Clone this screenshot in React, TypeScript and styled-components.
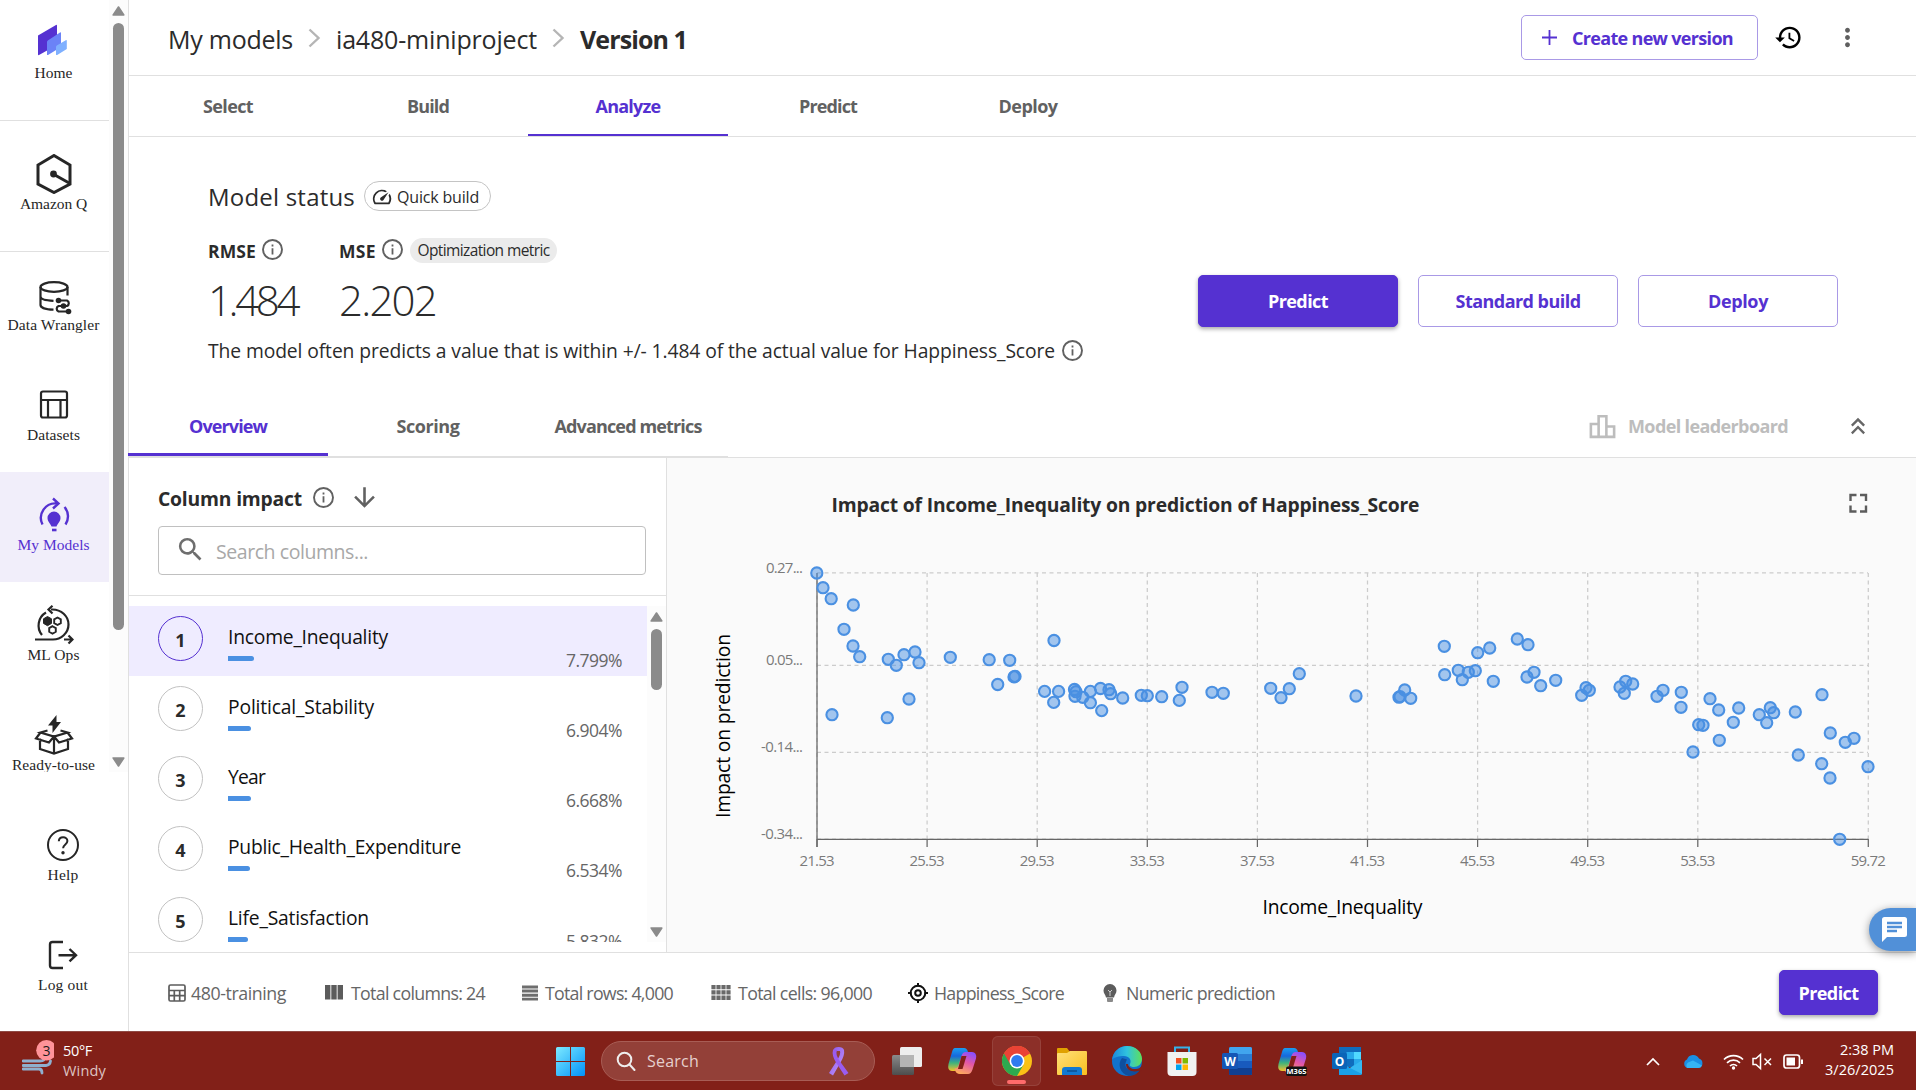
import React, { useLayoutEffect, useRef, useState } from "react";
import styled, { createGlobalStyle, css } from "styled-components";
import {
  MdHistory,
  MdMoreVert,
  MdSearch,
  MdArrowDownward,
  MdKeyboardDoubleArrowUp,
  MdOutlineLeaderboard,
  MdSpeed,
} from "react-icons/md";

const sans = `"Open Sans", "Noto Sans", sans-serif`;
const serif = `"Liberation Serif", serif`;
const purple = "#5531d1";
const line = "#e0e0e0";
const blue = "#4a90e2";

const Global = createGlobalStyle`
  * { box-sizing: border-box; }
  body { margin: 0; background: #fff; font-family: ${sans}; color: #2b2b2b; overflow: hidden; }
  svg { display: block; flex: none; }
`;

/* Text tracked so that it takes exactly the given width. */
const Tracked = styled.span`
  display: inline-block;
  white-space: pre;
`;
function Fit({ w, children }: { w: number; children: string }) {
  const ref = useRef<HTMLSpanElement>(null);
  const [spacing, setSpacing] = useState(0);
  useLayoutEffect(() => {
    const el = ref.current;
    if (!el) return;
    const natural = el.getBoundingClientRect().width - spacing * children.length;
    setSpacing((w - natural) / children.length);
  }, [w, children]);
  return (
    <Tracked ref={ref} style={{ letterSpacing: `${spacing}px` }}>
      {children}
    </Tracked>
  );
}

const Screen = styled.div`
  width: 1916px;
  height: 1090px;
  display: flex;
  flex-direction: column;
  overflow: hidden;
`;
const Page = styled.div`
  height: 1031px;
  display: flex;
`;

/* ---------- sidebar ---------- */
const Sidebar = styled.aside`
  width: 129px;
  border-right: 1px solid ${line};
  font-family: ${serif};
  flex: none;
`;
const NavScroll = styled.div`
  height: 772px;
  display: flex;
  overflow: hidden;
`;
const NavList = styled.nav`
  width: 109px;
  height: 772px;
  overflow: hidden;
`;
const NavItem = styled.div<{ $h?: number; $top?: number; $active?: boolean; $rule?: boolean }>`
  height: ${(p) => p.$h ?? 110}px;
  padding: ${(p) => p.$top ?? 23}px 2px 0 0;
  display: flex;
  flex-direction: column;
  align-items: center;
  color: ${(p) => (p.$active ? purple : "#262626")};
  background: ${(p) => (p.$active ? "#f1eefa" : "transparent")};
  border-bottom: ${(p) => (p.$rule ? `1px solid ${line}` : "none")};
`;
const NavLabel = styled.div`
  font-size: 15.5px;
  line-height: 20px;
  height: 20px;
`;
const NavBottom = styled.div`
  padding: 30px 0 0 0;
`;
const Track = styled.div<{ $w: number; $top: number; $bottom: number }>`
  width: ${(p) => p.$w}px;
  background: #fcfcfc;
  display: flex;
  flex-direction: column;
  align-items: center;
  padding: ${(p) => p.$top}px 0 ${(p) => p.$bottom}px;
`;
const Thumb = styled.div<{ $h: number }>`
  width: 11px;
  height: ${(p) => p.$h}px;
  margin-top: 7px;
  margin-bottom: auto;
  border-radius: 6px;
  background: #8b8b8b;
`;
const Arrow = ({ down }: { down?: boolean }) => (
  <svg width="13" height="10" viewBox="0 0 13 10">
    <path
      d={down ? "M1.2 1h10.6L6.5 9z" : "M1.2 9h10.6L6.5 1z"}
      fill="#8b8b8b"
      stroke="#8b8b8b"
      strokeWidth="1.6"
      strokeLinejoin="round"
    />
  </svg>
);

const Glyph = ({ children, sw = 2.2 }: { children: React.ReactNode; sw?: number }) => (
  <svg width="40" height="40" viewBox="0 0 40 40" fill="none" stroke="currentColor" strokeWidth={sw}>
    {children}
  </svg>
);
const HomeIcon = () => (
  <Glyph>
    <g stroke="none">
      <path d="M4 12.5 22 2q1-.5 1 .7V22L5 32q-1 .5-1-.7z" fill="#5531d1" />
      <path d="M13 19q0-1 .8-1.500L26 9.500q1-.5 1 .6V24L14 32q-1 .4-1-.6z" fill="#6b83f7" />
      <path d="M22 24q0-1 .8-1.500l9-5.300q1-.4 1 .6V26l-9.600 6q-1.200.4-1.200-.6z" fill="#7fb0ff" />
    </g>
  </Glyph>
);
const QIcon = () => (
  <Glyph sw={3}>
    <path d="M20 1.500 36 11v19L20 38.500 4 30V11z" />
    <path d="M20 20.500 36 29.500" />
    <circle cx="19.500" cy="20" r="3.400" fill="currentColor" stroke="none" />
  </Glyph>
);
const WranglerIcon = () => (
  <Glyph>
    <ellipse cx="20" cy="12" rx="13.500" ry="4.800" />
    <path d="M6.500 12v18c0 2.500 5 4.500 13 4.700M33.500 12v8.500M6.500 21.500c0 2.500 5 4 13 4.300" />
    <path d="M25 25.500h8a3 3 0 0 1 0 5.500h-8.500a3 3 0 0 0 0 5.500H33" />
    <g fill="currentColor" stroke="none">
      <circle cx="24.500" cy="25.500" r="2.800" />
      <circle cx="29.500" cy="31" r="2.800" />
      <circle cx="34.500" cy="36.500" r="2.800" />
    </g>
  </Glyph>
);
const DatasetIcon = () => (
  <Glyph>
    <rect x="7" y="6.500" width="26" height="26" rx="2" />
    <path d="M7 15h26M14 15v17.500M26.500 15v17.500" />
  </Glyph>
);
const ModelsIcon = () => (
  <Glyph sw={2.4}>
    <path d="M8.500 29.500A14.500 14.500 0 0 1 23 8.500M19 3.500l5.500 5-5.500 5" />
    <path d="M30.500 12a14.500 14.500 0 0 1 1 17.500" />
    <path
      d="M20 16.500a6.500 6.500 0 0 1 6.500 6.500c0 3.500-3 5.500-4 8.500h-5c-1-3-4-5-4-8.500a6.500 6.500 0 0 1 6.500-6.500z"
      fill="currentColor"
      stroke="none"
    />
    <path d="M18 35h4.500" strokeWidth="2.600" />
  </Glyph>
);
const OpsIcon = () => (
  <Glyph sw={2.2}>
    <path d="M8 30A15 15 0 0 1 12 7.500M17 4.500h1.500C27 4.500 34.500 11 34.500 19.500S27 34.500 19 34.500H1" />
    <path d="M18.500.8 14.500 4.500l4 4M30 34.500h8M34.500 30.500l4 4-4 4" />
    <path d="M13.500 11.500 17.500 13.800v4.600L13.500 20.700 9.500 18.400v-4.600z" fill="currentColor" strokeWidth="1" />
    <path d="m23.500 12.500 3.300 1.900v3.700l-3.300 1.900-3.300-1.900v-3.700zM18.500 21.200l3.300 1.900v3.700l-3.300 1.900-3.300-1.900v-3.700z" strokeWidth="1.900" />
  </Glyph>
);
const ReadyIcon = () => (
  <Glyph sw={2.2}>
    <path d="M22.500 0v7h4.500L18.500 18v-7.500H14z" fill="currentColor" stroke="none" />
    <path d="M6 23.500v10.500l14 4.500 14-4.500V23.500M20 21.500v17M13.500 15.500 6.500 17.500 20 21.500l13.500-4-7-2M6.500 17.500 2 23.500l13 4 5-6 5 6 13-4-4.500-6" />
  </Glyph>
);
const HelpIcon = () => (
  <Glyph sw={2}>
    <circle cx="20" cy="20" r="15" />
    <path d="M15.800 16.200c.2-5.400 8.600-5.200 8.600-.2 0 3.500-4.300 3.400-4.300 7.300" />
    <circle cx="20" cy="27.800" r="1.700" fill="currentColor" stroke="none" />
  </Glyph>
);
const LogoutIcon = () => (
  <Glyph sw={2.400}>
    <path d="M20 7H9.500Q7 7 7 9.500v21Q7 33 9.500 33H20M15.500 20.200h17M26.500 14l6.500 6.200-6.500 6.200" />
  </Glyph>
);

/* ---------- main column ---------- */
const Main = styled.main`
  flex: 1;
  min-width: 0;
  display: flex;
  flex-direction: column;
`;
const Header = styled.header`
  height: 76px;
  border-bottom: 1px solid ${line};
  display: flex;
  align-items: center;
  padding: 0 54px 0 39px;
`;
const Crumbs = styled.div`
  display: flex;
  align-items: center;
  font-size: 25px;
  font-weight: 500;
  line-height: 34px;
  padding-top: 2px;
  margin-right: auto;
  b { font-weight: 700; }
`;
const CrumbArrow = () => (
  <svg width="43" height="24" viewBox="0 0 43 24">
    <path d="m16.500 2.500 9 8.500-9 8.500" fill="none" stroke="#b5b5b5" strokeWidth="2.400" />
  </svg>
);
const Button = styled.button<{ $w: number; $h: number; $primary?: boolean }>`
  width: ${(p) => p.$w}px;
  height: ${(p) => p.$h}px;
  display: flex;
  align-items: center;
  justify-content: center;
  padding: 0;
  font: 700 18px/24px ${sans};
  border-radius: 5px;
  color: ${purple};
  background: #fff;
  border: 1px solid #a999e6;
  ${(p) =>
    p.$primary &&
    css`
      color: #fff;
      background: ${purple};
      border-color: ${purple};
      box-shadow: 0 2px 4px rgba(0, 0, 0, 0.35);
    `}
`;
const CreateButton = styled(Button)`
  padding-right: 4px;
  margin-right: 1px;
`;
const PlusIcon = styled.svg`
  margin-right: 15px;
`;
const HeaderIcons = styled.div`
  display: flex;
  align-items: center;
  gap: 30px;
  margin-left: 15px;
`;
const Tabs = styled.div`
  height: 61px;
  border-bottom: 1px solid ${line};
  display: flex;
`;
const Tab = styled.div<{ $active?: boolean; $bar?: number }>`
  width: 200px;
  text-align: center;
  font-size: 18px;
  font-weight: 700;
  line-height: 60px;
  height: 100%;
  color: ${(p) => (p.$active ? purple : "#616161")};
  box-shadow: ${(p) => (p.$active ? `inset 0 -${p.$bar ?? 2}px ${purple}` : "none")};
`;
const MainTab = styled(Tab)`
  margin-left: -1px;
  margin-right: 1px;
`;

const Status = styled.section`
  height: 264px;
  padding: 44px 78px 0 79px;
  display: flex;
  justify-content: space-between;
`;
const TitleRow = styled.div`
  display: flex;
  align-items: center;
  height: 30px;
  gap: 9px;
  font-size: 24px;
  font-weight: 500;
`;
const QuickPill = styled.div`
  width: 127px;
  height: 30px;
  border: 1px solid #c4c4c4;
  border-radius: 15px;
  display: flex;
  align-items: center;
  gap: 4px;
  padding: 1px 0 0 6px;
  font-size: 16px;
  font-weight: 400;
  line-height: 28px;
`;
const Metrics = styled.div`
  display: flex;
  margin-top: 27px;
`;
const Metric = styled.div<{ $w: number }>`
  width: ${(p) => p.$w}px;
`;
const MetricHead = styled.div`
  display: flex;
  align-items: center;
  gap: 6px;
  height: 25px;
  font-size: 17.5px;
  font-weight: 700;
  svg { margin-top: -2px; }
`;
const OptPill = styled.div`
  width: 147px;
  height: 25px;
  margin-left: 1px;
  border-radius: 13px;
  background: #ebebeb;
  text-align: center;
  font-size: 15.5px;
  font-weight: 400;
  line-height: 25px;
`;
const MetricValue = styled.div`
  margin-top: 12px;
  font-size: 42px;
  font-weight: 300;
  line-height: 50px;
`;
const Description = styled.div`
  display: flex;
  align-items: center;
  gap: 7px;
  margin-top: 14px;
  height: 24px;
  font-size: 19.3px;
  line-height: 24px;
  svg { margin-top: -2px; }
`;
const Actions = styled.div`
  display: flex;
  gap: 20px;
  margin-top: 94px;
`;

const SubRow = styled.div`
  height: 57px;
  display: flex;
  box-shadow: inset 0 -1px ${line};
`;
const SubTabs = styled.div`
  display: flex;
  margin-left: -1px;
  border-bottom: 2px solid ${line};
`;
const SubTab = styled(Tab)`
  line-height: 51px;
`;
const Leaderboard = styled.div`
  margin-left: auto;
  margin-right: 56px;
  display: flex;
  align-items: center;
  gap: 10px;
  height: 50px;
  color: #bdbdbd;
  font-size: 18px;
  font-weight: 700;
`;
const Collapse = styled.div`
  height: 50px;
  display: flex;
  align-items: center;
  color: #666;
  margin-right: 44px;
`;

const Split = styled.div`
  height: 494px;
  display: flex;
`;
const Columns = styled.section`
  width: 538px;
  border-right: 1px solid ${line};
  flex: none;
`;
const ColumnsHead = styled.div`
  height: 138px;
  border-bottom: 1px solid ${line};
  padding: 24px 0 0 29px;
`;
const ColumnsTitle = styled.div`
  display: flex;
  align-items: center;
  height: 32px;
  font-size: 19.3px;
  font-weight: 700;
  color: #616161;
  span { color: #2b2b2b; margin-right: 11px; }
  svg { margin-top: -2px; }
  svg + svg { margin: -2px 0 0 15px; }
`;
const SearchBox = styled.div`
  width: 488px;
  height: 49px;
  margin-top: 12px;
  border: 1px solid #c0c0c0;
  border-radius: 4px;
  display: flex;
  align-items: center;
  padding: 2px 0 0 16px;
  gap: 10px;
  font-size: 19.5px;
  color: #a8a8a8;
  svg { color: #6e6e6e; margin-top: -5px; }
`;
const ListArea = styled.div`
  display: flex;
  height: 336px;
  margin-top: 10px;
  overflow: hidden;
`;
const List = styled.div`
  width: 518px;
  height: 336px;
  overflow: hidden;
`;
const Row = styled.div<{ $active?: boolean }>`
  height: ${(p) => (p.$active ? 70 : 70.2)}px;
  display: flex;
  padding: 10px 25px 0 29px;
  background: ${(p) => (p.$active ? "#efecff" : "#fff")};
`;
const Rank = styled.div<{ $active?: boolean }>`
  width: 45px;
  height: 45px;
  border-radius: 50%;
  border: 1px solid ${(p) => (p.$active ? purple : "#c2c2c2")};
  background: ${(p) => (p.$active ? "transparent" : "#fff")};
  text-align: center;
  font-size: 18px;
  font-weight: 700;
  line-height: 46px;
`;
const RowName = styled.div`
  margin-left: 25px;
  flex: 1;
  color: #111;
  font-size: 19.3px;
  line-height: 26px;
  padding-top: 8px;
`;
const Bar = styled.div`
  height: 5px;
  margin-top: 6px;
  border-radius: 0 3px 3px 0;
  background: ${blue};
`;
const Percent = styled.div`
  padding-top: 32px;
  font-size: 17.5px;
  line-height: 24px;
  color: #666;
`;
const ChartPanel = styled.section`
  flex: 1;
  background: #fafafa;
`;

const Footer = styled.footer`
  height: 79px;
  border-top: 1px solid ${line};
  display: flex;
  align-items: center;
  padding: 1px 38px 0 39px;
  justify-content: space-between;
`;
const Facts = styled.div`
  display: grid;
  grid-template-columns: 157px 197px 189px 197px 195px 180px;
`;
const Fact = styled.div<{ $gap: number }>`
  display: flex;
  align-items: center;
  gap: ${(p) => p.$gap}px;
  font-size: 17.800px;
  line-height: 24px;
  color: #666;
  padding-top: 1px;
`;
const ChatButton = styled.div`
  position: fixed;
  right: 0;
  top: 908px;
  width: 47px;
  height: 43px;
  border-radius: 22px 0 0 22px;
  background: #5190d8;
  box-shadow: 0 2px 8px rgba(0, 0, 0, 0.4);
  padding: 9px 0 0 13px;
`;

const InfoIcon = () => (
  <svg width="21" height="21" viewBox="0 0 21 21">
    <circle cx="10.500" cy="10.500" r="9.500" fill="none" stroke="#616161" strokeWidth="1.900" />
    <path d="M10.500 9.300v6.200M10.500 5.500v2" stroke="#616161" strokeWidth="1.800" />
  </svg>
);

/* ---------- chart ---------- */
const points: [number, number][] = [
  [816.8, 573], [823, 587.7], [831.2, 598.7], [853.3, 605], [844, 629.3], [853, 646], [859.7, 656.7],
  [888.3, 659.3], [896.3, 665.3], [904, 654.7], [915, 652], [919, 662.7], [950.3, 657.3], [989.2, 659.7],
  [1009.7, 660.3], [1014, 676.9], [1015, 676.4], [997.7, 684.5], [909, 699], [887.3, 717.7], [832, 714.7],
  [1054, 640.5], [1044.6, 691.4], [1053.7, 702.4], [1058.6, 691.4], [1074.5, 689.5], [1076, 691.7],
  [1075, 696.3], [1082.7, 697.3], [1090.4, 691.4], [1090.4, 702.7], [1100.5, 688.5], [1101.7, 710.6],
  [1109, 689.7], [1110.7, 693.7], [1122.7, 698], [1141.3, 695.3], [1147.3, 695.7], [1161.7, 696.7],
  [1179.3, 700.4], [1182, 687.3], [1212, 692.3], [1223.3, 693.3], [1270.7, 688.3], [1281, 697.7],
  [1289.3, 688.7], [1299.3, 673.7], [1356, 696], [1399, 697.2], [1400, 696.6], [1404.7, 690],
  [1410.7, 698.3], [1444.3, 646.3], [1444.7, 674.7], [1458.3, 670.3], [1462.3, 679.7], [1468.3, 672.3],
  [1475.3, 670.7], [1477.7, 652.7], [1489.7, 648], [1493.3, 681.3], [1517.3, 639], [1528, 644.7],
  [1527, 677], [1534, 672.3], [1540.7, 685.7], [1555.7, 680.3], [1581.7, 695.3], [1586, 687.7],
  [1589.3, 690.3], [1620, 687], [1625.7, 681.3], [1624.3, 693.3], [1632.7, 684], [1657, 696.3],
  [1663, 690.3], [1681.3, 692.3], [1681, 707.3], [1710, 698.7], [1718.7, 710], [1698.7, 724.7],
  [1703, 725.3], [1719.3, 740.3], [1693, 752], [1733.3, 722.3], [1738.7, 708], [1759.3, 714.7],
  [1770.3, 707.7], [1773.7, 712.7], [1766.7, 722.7], [1795.3, 712], [1822, 694.7], [1830.3, 733],
  [1845.3, 742.3], [1854, 738.3], [1798.3, 755], [1821.7, 763.7], [1830, 778], [1868, 766.7], [1839.7, 839.3],
];
const xTicks: [number, string][] = [
  [817, "21.53"], [927.100, "25.53"], [1037.200, "29.53"], [1147.300, "33.53"], [1257.400, "37.53"],
  [1367.500, "41.53"], [1477.600, "45.53"], [1587.700, "49.53"], [1697.800, "53.53"], [1868.300, "59.72"],
];
const yTicks: [number, string, number][] = [
  [572.8, "0.27...", 37], [665.4, "0.05...", 37], [752.400, "-0.14...", 42], [839.2, "-0.34...", 42],
];
const Chart = () => (
  <svg width="1249" height="494" viewBox="667 458 1249 494" fontFamily={sans}>
    <text x="831.500" y="511.500" fontSize="19.300" fontWeight="700" fill="#2b2b2b" textLength="588">
      Impact of Income_Inequality on prediction of Happiness_Score
    </text>
    <path
      d="M1850.500 501v-6h6M1860 495h6v6M1866 505.500v6h-6M1856.500 511.500h-6v-6"
      fill="none"
      stroke="#5c5c5c"
      strokeWidth="2.400"
    />
    {yTicks.map(([y]) => (
      <line key={y} x1="817" x2="1868" y1={y} y2={y} stroke="#cccccc" strokeWidth="1.250" strokeDasharray="4 3.500" />
    ))}
    {xTicks.map(([x]) => (
      <line key={x} x1={x} x2={x} y1="573" y2="839" stroke="#cccccc" strokeWidth="1.250" strokeDasharray="4 3.500" />
    ))}
    <path d="M817 573v274M817 839.300h1051.300" fill="none" stroke="#666" strokeWidth="1.250" />
    {xTicks.map(([x, t]) => (
      <g key={t}>
        <line x1={x} x2={x} y1="839" y2="847" stroke="#666" strokeWidth="1.250" />
        <text x={x - 17.500} y="866" fontSize="15" fill="#7a7a7a" textLength="35">
          {t}
        </text>
      </g>
    ))}
    {yTicks.map(([y, t, w]) => (
      <text key={t} x={803 - w} y={y} fontSize="15" fill="#7a7a7a" textLength={w}>
        {t}
      </text>
    ))}
    {points.map(([x, y], i) => (
      <circle key={i} cx={x} cy={y} r="5.600" fill={blue} fillOpacity="0.5" stroke={blue} strokeWidth="2.100" />
    ))}
    <text transform="translate(730 818) rotate(-90)" fontSize="19.300" fill="#000" textLength="184">
      Impact on prediction
    </text>
    <text x="1262.500" y="914" fontSize="19.300" fill="#000" textLength="160">
      Income_Inequality
    </text>
  </svg>
);

/* ---------- taskbar ---------- */
const Taskbar = styled.div`
  height: 59px;
  background: #822018;
  border-top: 1px solid #8f4a44;
  color: #fff;
  display: flex;
  align-items: center;
  justify-content: space-between;
  padding: 0 23px 0 22px;
`;
const Weather = styled.div`
  display: flex;
  width: 534px;
  gap: 9px;
  font-size: 14.5px;
  line-height: 20px;
  div + div { color: #ddc4c2; }
`;
const WeatherIcon = styled.svg`
  margin-top: -2px;
`;
const Lines = styled.div`
  margin-top: -1px;
`;
const Apps = styled.div`
  display: flex;
  align-items: center;
  height: 58px;
  margin-right: auto;
`;
const TaskSearch = styled.div`
  width: 274px;
  height: 40px;
  margin: 0 17px 0 16px;
  border: 1px solid #a85d55;
  border-radius: 20px;
  background: #934038;
  display: flex;
  align-items: center;
  padding: 0 25px 0 14px;
  gap: 11px;
  font-size: 16px;
  color: #e6d0ce;
  svg + span { margin-right: auto; }
`;
const AppTile = styled.div<{ $on?: boolean }>`
  width: 49px;
  height: 50px;
  margin-right: 6px;
  border-radius: 6px;
  display: flex;
  flex-direction: column;
  align-items: center;
  padding-top: 10px;
  gap: 4px;
  ${(p) => p.$on && "background: #8c2f28; box-shadow: inset 0 0 0 1px #96423b;"}
`;
const RunningMark = styled.div`
  width: 19px;
  height: 4px;
  border-radius: 2px;
  background: #ff6b6b;
`;
const AppRow = styled.div`
  display: flex;
  margin-left: -10px;
`;
const Tray = styled.div`
  display: flex;
  align-items: center;
`;
const Clock = styled.div`
  width: 77px;
  margin: -2px -1px 0 13px;
  text-align: right;
  font-size: 14.5px;
  line-height: 20px;
`;

const App30 = ({ children }: { children: React.ReactNode }) => (
  <svg width="30" height="30" viewBox="0 0 30 30">
    {children}
  </svg>
);
const CopilotShape = () => (
  <>
    <path d="M8 2h9q3 0 4 4l1.500 5h-5q-2.500 0-3.500 3l-2.500 8q-1 3-4 3H5Q0 25 1.500 18L5 6q1-4 3-4z" fill="url(#cpA)" />
    <path d="M22.500 6H25q5 0 4 6.500l-3.500 11Q24 28 21 28h-8q-4 0-5-4l-.5-1.500q3 0 4-3l3-9.500q1.200-4 4-4z" fill="url(#cpB)" />
    <path d="M14.500 10h5l-4 13h-4.500z" fill="#822018" />
  </>
);
const Gradients = () => (
  <svg width="0" height="0">
    <defs>
      <linearGradient id="cpA" x1="0" y1="0" x2="0" y2="1">
        <stop offset="0" stopColor="#1b9df0" />
        <stop offset=".35" stopColor="#1668dd" />
        <stop offset=".65" stopColor="#3fb37c" />
        <stop offset="1" stopColor="#f4c22b" />
      </linearGradient>
      <linearGradient id="cpB" x1=".7" y1="0" x2=".3" y2="1">
        <stop offset="0" stopColor="#8a4fff" />
        <stop offset=".45" stopColor="#e457a5" />
        <stop offset="1" stopColor="#ffab5c" />
      </linearGradient>
      <linearGradient id="win" x1="0" y1="0" x2="1" y2="1">
        <stop offset="0" stopColor="#7deaff" />
        <stop offset="1" stopColor="#0091f8" />
      </linearGradient>
      <linearGradient id="fold" x1="0" y1="0" x2="1" y2="1">
        <stop offset="0" stopColor="#ffe07a" />
        <stop offset="1" stopColor="#f9bf1f" />
      </linearGradient>
      <linearGradient id="edgeA" x1="0" y1=".3" x2="1" y2=".3">
        <stop offset="0" stopColor="#1a86dd" />
        <stop offset=".5" stopColor="#2fc3df" />
        <stop offset="1" stopColor="#5fe05a" />
      </linearGradient>
      <linearGradient id="rib" x1="0" y1="0" x2="1" y2="1">
        <stop offset="0" stopColor="#8a52e8" />
        <stop offset="1" stopColor="#c49bff" />
      </linearGradient>
      <linearGradient id="gray" x1="0" y1="0" x2="0" y2="1">
        <stop offset="0" stopColor="#8a8a8a" />
        <stop offset="1" stopColor="#4d4d4d" />
      </linearGradient>
    </defs>
  </svg>
);
const officeText = { fontFamily: sans, fontWeight: 700, fill: "#fff" };

const rows = [
  { name: "Income_Inequality", w: 160, pct: "7.799%", bar: 26 },
  { name: "Political_Stability", w: 146, pct: "6.904%", bar: 23 },
  { name: "Year", w: 37, pct: "6.668%", bar: 22.5 },
  { name: "Public_Health_Expenditure", w: 233, pct: "6.534%", bar: 22 },
  { name: "Life_Satisfaction", w: 141, pct: "5.832%", bar: 20 },
];

export default function App() {
  return (
    <Screen>
      <Global />
      <Gradients />
      <Page>
        <Sidebar>
          <NavScroll>
            <NavList>
              <NavItem $h={121} $rule><HomeIcon /><NavLabel><Fit w={38}>Home</Fit></NavLabel></NavItem>
              <NavItem $h={131} $top={33} $rule><QIcon /><NavLabel><Fit w={67}>Amazon Q</Fit></NavLabel></NavItem>
              <NavItem><WranglerIcon /><NavLabel><Fit w={92}>Data Wrangler</Fit></NavLabel></NavItem>
              <NavItem><DatasetIcon /><NavLabel><Fit w={53}>Datasets</Fit></NavLabel></NavItem>
              <NavItem $active><ModelsIcon /><NavLabel><Fit w={72}>My Models</Fit></NavLabel></NavItem>
              <NavItem><OpsIcon /><NavLabel><Fit w={52}>ML Ops</Fit></NavLabel></NavItem>
              <NavItem><ReadyIcon /><NavLabel><Fit w={83}>Ready-to-use</Fit></NavLabel></NavItem>
            </NavList>
            <Track $w={19} $top={6} $bottom={5}>
              <Arrow />
              <Thumb $h={607} />
              <Arrow down />
            </Track>
          </NavScroll>
          <NavBottom>
            <NavItem><HelpIcon /><NavLabel><Fit w={31}>Help</Fit></NavLabel></NavItem>
            <NavItem><LogoutIcon /><NavLabel><Fit w={50}>Log out</Fit></NavLabel></NavItem>
          </NavBottom>
        </Sidebar>

        <Main>
          <Header>
            <Crumbs>
              <Fit w={125}>My models</Fit>
              <CrumbArrow />
              <Fit w={201}>ia480-miniproject</Fit>
              <CrumbArrow />
              <b><Fit w={107}>Version 1</Fit></b>
            </Crumbs>
            <CreateButton $w={237} $h={45}>
              <PlusIcon width="15" height="15" viewBox="0 0 15 15">
                <path d="M7.500 0v15M0 7.500h15" stroke={purple} strokeWidth="1.800" />
              </PlusIcon>
              <Fit w={161}>Create new version</Fit>
            </CreateButton>
            <HeaderIcons>
              <MdHistory size={29} color="#000" />
              <MdMoreVert size={29} color="#5f5f5f" />
            </HeaderIcons>
          </Header>

          <Tabs>
            <MainTab><Fit w={50}>Select</Fit></MainTab>
            <MainTab><Fit w={42}>Build</Fit></MainTab>
            <MainTab $active><Fit w={65}>Analyze</Fit></MainTab>
            <MainTab><Fit w={58}>Predict</Fit></MainTab>
            <MainTab><Fit w={59}>Deploy</Fit></MainTab>
          </Tabs>

          <Status>
            <div>
              <TitleRow>
                <Fit w={147}>Model status</Fit>
                <QuickPill>
                  <MdSpeed size={22} />
                  <Fit w={82}>Quick build</Fit>
                </QuickPill>
              </TitleRow>
              <Metrics>
                <Metric $w={131}>
                  <MetricHead><Fit w={48}>RMSE</Fit><InfoIcon /></MetricHead>
                  <MetricValue><Fit w={89}>1.484</Fit></MetricValue>
                </Metric>
                <Metric $w={240}>
                  <MetricHead>
                    <Fit w={37}>MSE</Fit><InfoIcon />
                    <OptPill><Fit w={132}>Optimization metric</Fit></OptPill>
                  </MetricHead>
                  <MetricValue><Fit w={97}>2.202</Fit></MetricValue>
                </Metric>
              </Metrics>
              <Description>
                <Fit w={847}>The model often predicts a value that is within +/- 1.484 of the actual value for Happiness_Score</Fit>
                <InfoIcon />
              </Description>
            </div>
            <Actions>
              <Button $w={200} $h={52} $primary><Fit w={60}>Predict</Fit></Button>
              <Button $w={200} $h={52}><Fit w={125}>Standard build</Fit></Button>
              <Button $w={200} $h={52}><Fit w={60}>Deploy</Fit></Button>
            </Actions>
          </Status>

          <SubRow>
            <SubTabs>
              <SubTab $active $bar={3}><Fit w={78}>Overview</Fit></SubTab>
              <SubTab><Fit w={63}>Scoring</Fit></SubTab>
              <SubTab><Fit w={147}>Advanced metrics</Fit></SubTab>
            </SubTabs>
            <Leaderboard>
              <MdOutlineLeaderboard size={31} />
              <Fit w={160}>Model leaderboard</Fit>
            </Leaderboard>
            <Collapse><MdKeyboardDoubleArrowUp size={28} /></Collapse>
          </SubRow>

          <Split>
            <Columns>
              <ColumnsHead>
                <ColumnsTitle>
                  <Fit w={144}>Column impact</Fit>
                  <InfoIcon />
                  <MdArrowDownward size={31} />
                </ColumnsTitle>
                <SearchBox>
                  <MdSearch size={31} />
                  <Fit w={152}>Search columns...</Fit>
                </SearchBox>
              </ColumnsHead>
              <ListArea>
                <List>
                  {rows.map((r, i) => (
                    <Row key={r.name} $active={i === 0}>
                      <Rank $active={i === 0}>{i + 1}</Rank>
                      <RowName>
                        <Fit w={r.w}>{r.name}</Fit>
                        <Bar style={{ width: r.bar }} />
                      </RowName>
                      <Percent><Fit w={56}>{r.pct}</Fit></Percent>
                    </Row>
                  ))}
                </List>
                <Track $w={19} $top={6} $bottom={5}>
                  <Arrow />
                  <Thumb $h={61} />
                  <Arrow down />
                </Track>
              </ListArea>
            </Columns>
            <ChartPanel><Chart /></ChartPanel>
          </Split>

          <Footer>
            <Facts>
              <Fact $gap={5}>
                <svg width="18" height="18" viewBox="0 0 18 18" fill="none" stroke="#5c5c5c" strokeWidth="1.700">
                  <rect x="1" y="1" width="16" height="16" rx="1.500" />
                  <path d="M1 6.500h16M1 11.700h16M6.300 6.500V17M11.700 6.500V17" />
                </svg>
                <Fit w={95}>480-training</Fit>
              </Fact>
              <Fact $gap={8}>
                <svg width="18" height="18" viewBox="0 0 18 18" fill="#5c5c5c">
                  <path d="M0 1h5.400v14.500H0zM6.300 1h5.400v14.500H6.300zM12.600 1H18v14.500h-5.400z" />
                </svg>
                <Fit w={134}>Total columns: 24</Fit>
              </Fact>
              <Fact $gap={7}>
                <svg width="16" height="18" viewBox="0 0 16 18" fill="#6e6e6e">
                  <path d="M0 1.500h16v3H0zM0 5.600h16v3H0zM0 9.700h16v3H0zM0 13.700h16v2.800H0z" />
                </svg>
                <Fit w={128}>Total rows: 4,000</Fit>
              </Fact>
              <Fact $gap={7}>
                <svg width="20" height="18" viewBox="0 0 20 18">
                  <path d="M2.500 1v15M7.500 1v15M12.500 1v15M17.500 1v15" stroke="#6a6a6a" strokeWidth="4.200" strokeDasharray="4.300 1" />
                </svg>
                <Fit w={134}>Total cells: 96,000</Fit>
              </Fact>
              <Fact $gap={6}>
                <svg width="20" height="20" viewBox="0 0 20 20" fill="none" stroke="#111" strokeWidth="2">
                  <circle cx="10" cy="10" r="7.300" />
                  <circle cx="10" cy="10" r="2.800" />
                  <path d="M10 0v3.500M10 16.500V20M0 10h3.500M16.500 10H20" />
                </svg>
                <Fit w={130}>Happiness_Score</Fit>
              </Fact>
              <Fact $gap={9}>
                <svg width="14" height="19" viewBox="0 0 14 19">
                  <path d="M7 0a6.500 6.500 0 0 1 6.500 6.500c0 3-2 4-2.500 7H3C2.500 10.500.5 9.500.5 6.500A6.500 6.500 0 0 1 7 0z" fill="#5c5c5c" />
                  <path d="M5 6l2 2 2-2M7 8v4" stroke="#ccc" fill="none" />
                  <path d="M4 14h6v3q0 1-1 1H5q-1 0-1-1z" fill="#8a8a8a" />
                </svg>
                <Fit w={149}>Numeric prediction</Fit>
              </Fact>
            </Facts>
            <Button $w={99} $h={45} $primary><Fit w={60}>Predict</Fit></Button>
          </Footer>
        </Main>
      </Page>

      <ChatButton>
        <svg width="26" height="26" viewBox="0 0 26 26">
          <path d="M2.500 0h20Q25 0 25 2.500v15q0 2.500-2.500 2.500H5l-5 5V2.500Q0 0 2.500 0z" fill="#fff" />
          <path d="M5 6h15M5 10h15M5 14h10" stroke="#5190d8" strokeWidth="2.300" />
        </svg>
      </ChatButton>

      <Taskbar>
        <Weather>
          <WeatherIcon width="32" height="40" viewBox="0 0 32 40">
            <path
              d="M1 21h17q5 0 5-4.500M1 25.500h23q4-.5 4.500-4.500M1 29h16q3 0 3 4"
              fill="none"
              stroke="#8fb0cf"
              strokeWidth="2.800"
              strokeLinecap="round"
            />
            <circle cx="24.500" cy="10.300" r="10.300" fill="#ff9399" />
            <text x="24.500" y="15.500" fontSize="14" textAnchor="middle" fontFamily={sans} fill="#1c1c1c">3</text>
          </WeatherIcon>
          <Lines>
            <div><Fit w={29}>50°F</Fit></div>
            <div><Fit w={43}>Windy</Fit></div>
          </Lines>
        </Weather>
        <Apps>
          <svg width="29" height="29" viewBox="0 0 29 29">
            <path d="M1.500 0H14v14H0V1.500Q0 0 1.500 0zM15 0h12.500Q29 0 29 1.500V14H15zM0 15h14v14H1.500Q0 29 0 27.500zM15 15h14v12.500q0 1.500-1.500 1.500H15z" fill="url(#win)" />
          </svg>
          <TaskSearch>
            <svg width="20" height="20" viewBox="0 0 20 20" fill="none" stroke="#eee" strokeWidth="2">
              <circle cx="8.500" cy="8.500" r="6.800" />
              <path d="m13.500 13.500 5 5.500" strokeLinecap="round" />
            </svg>
            <Fit w={52}>Search</Fit>
            <svg width="21" height="30" viewBox="0 0 21 30">
              <path d="M5.500 4Q6 1 10.500 1T16 4q1 5-3.500 12.500L5 29.500 1 27 9 14.500q4-6.500 3-9.500h-3z" fill="url(#rib)" />
              <path d="M8.800 5Q7.500 8 11 14L20.500 27l-4 2.500-8.500-13Q3.500 9 5 4 6 2 8.800 5z" fill="#9a5cf0" />
            </svg>
          </TaskSearch>
          <AppRow>
            <AppTile>
              <App30>
                <rect x="8" y="1" width="22" height="20" rx="1.500" fill="#ededed" />
                <rect x="0" y="9" width="22" height="20" rx="1.500" fill="url(#gray)" />
                <path d="M8 9h14v12H8z" fill="#b4b4b4" />
              </App30>
            </AppTile>
            <AppTile><App30><CopilotShape /></App30></AppTile>
            <AppTile $on>
              <App30>
                <circle cx="15" cy="15" r="15" fill="#fbc116" />
                <path d="M15 15 2 7.500A15 15 0 0 1 28 7.500z" fill="#ea4335" />
                <path d="M2 7.500A15 15 0 0 0 15 30l6.500-11.300L15 15z" fill="#2da94f" />
                <path d="M2 7.500 8.500 18.800 15 7.500h13A15 15 0 0 0 2 7.500z" fill="#ea4335" />
                <circle cx="15" cy="15" r="7.500" fill="#fff" />
                <circle cx="15" cy="15" r="5.900" fill="#2f7bf0" />
              </App30>
              <RunningMark />
            </AppTile>
            <AppTile>
              <App30>
                <path d="M0 3q0-1 1-1h9l3 4v8H0z" fill="#e0a100" />
                <path d="M0 8q0-1 1-1h9l3-2h16q1 0 1 1v22q0 1-1 1H1q-1 0-1-1z" fill="url(#fold)" />
                <path d="M5 29v-5q0-3 3-3h14q3 0 3 3v5z" fill="#1279d2" />
                <path d="M10 25h10" stroke="#0b4f93" strokeWidth="1.500" />
              </App30>
            </AppTile>
            <AppTile>
              <App30>
                <circle cx="15" cy="15" r="15" fill="#1272cc" />
                <path d="M0 14C1 5 8 0 15 0c9 0 15 6 15 13 0 5-4 8-8 8-3 0-5-1-4-3 2-4-1-8-6-8-5 0-10 1-12 4z" fill="url(#edgeA)" />
                <path d="M16 18c0 3 4 5.500 8 5 2.500-.3 4-1 6-3v3l-1.500 2C21 28 14 25 14 18z" fill="#822018" />
                <path d="M10 12C5 18 8 28 17 30c5-.5 8-2 10.500-5.500-6 2.500-13 0-14-5-.5-3 1-5 1.500-6z" fill="#0f4f9f" />
              </App30>
            </AppTile>
            <AppTile>
              <App30>
                <path d="M8 7V1.500h14V7" fill="none" stroke="#35b3ea" strokeWidth="2" />
                <path d="M0.500 6h29v20q0 4-4 4h-21q-4 0-4-4z" fill="#f1f1f1" />
                <path d="M9 12h5.500v5.500H9z" fill="#f25022" /><path d="M15.500 12H21v5.500h-5.500z" fill="#7fba00" />
                <path d="M9 18.500h5.500V24H9z" fill="#00a4ef" /><path d="M15.500 18.500H21V24h-5.500z" fill="#ffb900" />
              </App30>
            </AppTile>
            <AppTile>
              <App30>
                <rect x="7" y="1" width="23" height="28" rx="1.500" fill="#185abd" />
                <path d="M7 2.500Q7 1 8.500 1h20Q30 1 30 2.500V8H7z" fill="#41a5ee" />
                <path d="M7 8h23v7H7z" fill="#2b7cd3" /><path d="M7 22h23v5.500q0 1.500-1.500 1.500h-20Q7 29 7 27.500z" fill="#103f91" />
                <rect x="0" y="7" width="16" height="16" rx="1.500" fill="#1556b5" />
                <text x="8" y="19.500" fontSize="12" textAnchor="middle" {...officeText}>W</text>
              </App30>
            </AppTile>
            <AppTile>
              <App30>
                <CopilotShape />
                <rect x="9" y="20.500" width="21" height="9.500" rx="2" fill="#111" />
                <text x="19.500" y="28" fontSize="7.500" textAnchor="middle" {...officeText}>M365</text>
              </App30>
            </AppTile>
            <AppTile>
              <App30>
                <rect x="7" y="1" width="22" height="20" fill="#0f6cbd" />
                <path d="M14.500 6H22v7h-7.500z" fill="#28a8ea" /><path d="M22 6h7v7h-7z" fill="#50d9ff" />
                <path d="M22 13h7v7h-7z" fill="#28a8ea" />
                <path d="M7 29V15l11 7 12-8v13.500q0 1.500-1.500 1.500z" fill="#1aa0e8" />
                <path d="M30 14v14L18 22z" fill="#35b8f1" />
                <rect x="0" y="7" width="15" height="16" rx="1.500" fill="#0a64b8" />
                <text x="7.500" y="19.500" fontSize="12" textAnchor="middle" {...officeText}>O</text>
              </App30>
            </AppTile>
          </AppRow>
        </Apps>
        <Tray>
          <svg width="158" height="20" viewBox="1647 1050 158 20" fill="none" stroke="#fff" strokeWidth="1.700">
            <path d="m1648 1064 6-6 6 6" />
            <path d="M1688.500 1067a4.500 4.500 0 0 1-.5-8.500 6.500 6.500 0 0 1 12-1 5 5 0 0 1 0 9.500z" fill="#1b8fe3" stroke="none" />
            <path d="M1688 1067a4.500 4.500 0 0 1 1-5.500l5-2 9 5q-1 2.500-4 2.500z" fill="#35b5f5" stroke="none" />
            <path d="M1725 1058.500a13.500 13.500 0 0 1 19 0M1728 1061.800a9.300 9.300 0 0 1 13 0M1731 1065a5 5 0 0 1 7 0" />
            <circle cx="1734.500" cy="1067" r="1.700" fill="#fff" stroke="none" />
            <path d="M1754 1057.500h3l4.500-4v14l-4.500-4h-3zM1765.500 1057.500l6.500 6.500M1772 1057.500l-6.500 6.500" strokeWidth="1.500" />
            <rect x="1785" y="1054" width="15.500" height="13" rx="2.500" />
            <path d="M1787.500 1056.500h8.500v8h-8.500z" fill="#fff" stroke="none" />
            <path d="M1803 1058.500v4.500" strokeWidth="2" />
          </svg>
          <Clock>
            <div><Fit w={54}>2:38 PM</Fit></div>
            <div><Fit w={69}>3/26/2025</Fit></div>
          </Clock>
        </Tray>
      </Taskbar>
    </Screen>
  );
}
